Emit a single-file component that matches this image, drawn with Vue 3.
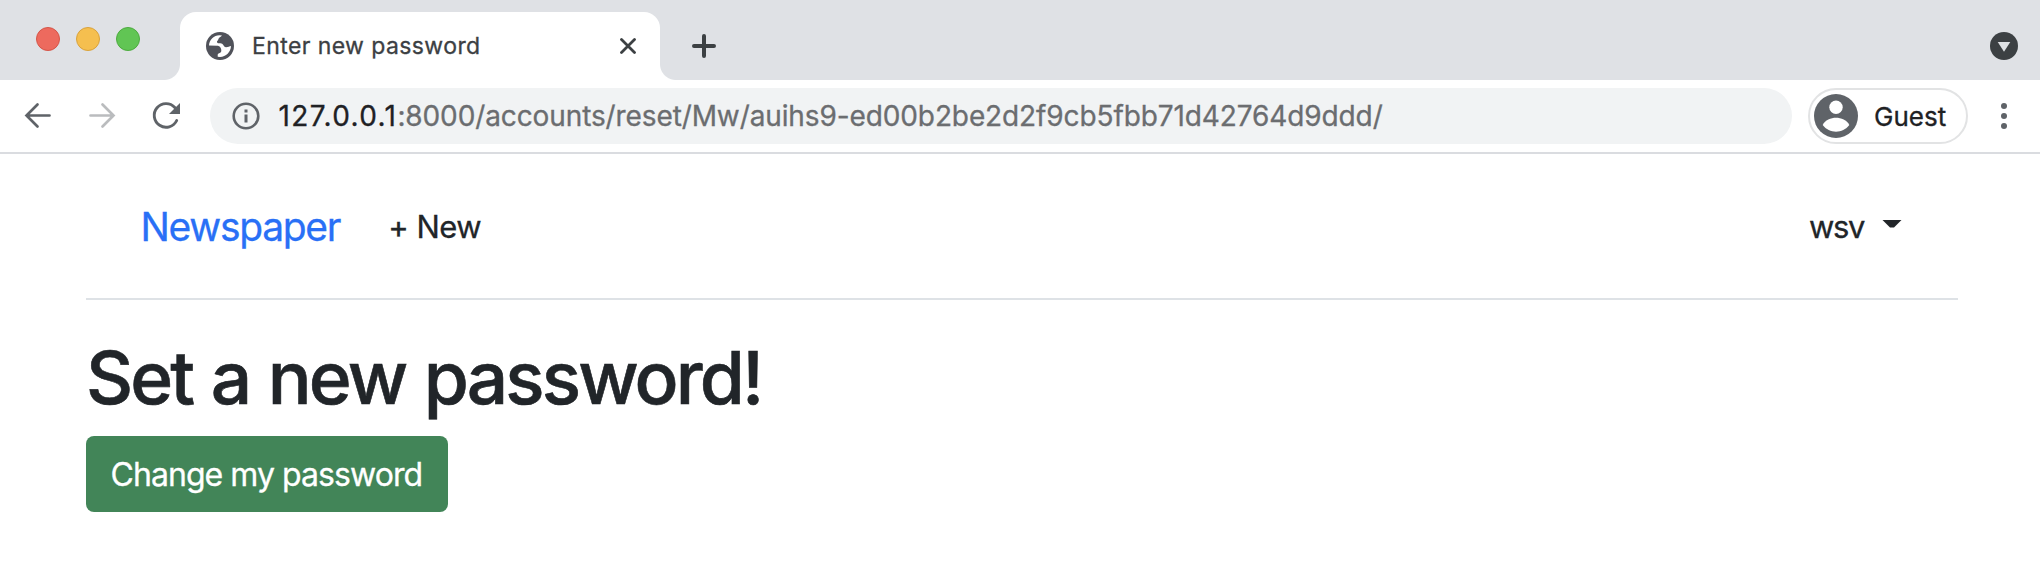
<script setup>
const dots = ['red', 'yellow', 'green']
</script>

<template>
  <div class="window">
    <header class="tabstrip">
      <div class="lights"><span v-for="d in dots" :key="d" class="light" :class="d"></span></div>
      <div class="tab">
        <svg class="globe" viewBox="0 0 28 28"><circle cx="14" cy="14" r="14" fill="#50525a" /><path d="M3 13.6C3.2 8 8 3.4 13.4 3.3L16 3.6C15 5 14.2 5 13.2 5.800C12 7 12.400 8.500 11 9.300C11 12 12.500 11 15.400 11.500C17.500 12 17.600 15 20 15.300C22 15.400 23.500 14 25 14C24.800 20 20 24.900 14 25L11.700 24.700V22.500C12.500 20.800 15 21.300 15.300 19C15.400 16.500 14.500 14.200 12 13.700Z" fill="#fff" /></svg>
        <span class="t title">Enter new password</span>
        <svg class="close" viewBox="0 0 16 16"><path d="M1.500 1.500 14.500 14.500M14.500 1.500 1.500 14.500" /></svg>
      </div>
      <svg class="plus" viewBox="0 0 24 24"><path d="M12 2V22M2 12H22" /></svg>
      <svg class="search" viewBox="0 0 28 28"><circle cx="14" cy="14" r="14" fill="#3c4043" /><path d="M7.700 10H20.300L14 19.700Z" fill="#dee0e4" /></svg>
    </header>
    <div class="toolbar">
      <svg class="arrow" viewBox="0 0 28 28"><path d="M25.500 13.500H2.500M13.500 2.500 2.500 13.500 13.500 24.500" /></svg>
      <svg class="arrow forward" viewBox="0 0 28 28"><path d="M2.500 13.500H25.500M14.500 2.500 25.500 13.500 14.500 24.500" /></svg>
      <svg class="reload" viewBox="0 0 28 28"><path d="M22.800 5.500A11.800 11.800 0 1 0 24.700 18.500" /><path d="M28 1V12H17Z" class="head" /></svg>
      <div class="omnibox">
        <svg class="info" viewBox="0 0 28 28"><circle cx="14" cy="14" r="12.300" /><path d="M12.500 7.500H15.500V10.500H12.500ZM12.500 12.500H15.500V20.500H12.500Z" /></svg>
        <span class="url"><span class="t host">127.0.0.1</span><span class="t path">:8000/accounts/reset/Mw/auihs9-ed00b2be2d2f9cb5fbb71d42764d9ddd/</span></span>
      </div>
      <div class="guest">
        <svg class="avatar" viewBox="0 0 44 44"><circle cx="22" cy="22" r="22" fill="#5f6368" /><circle cx="22" cy="13.300" r="6.700" fill="#fff" /><path d="M8.700 31C11 26 17 23.700 22 23.700S33 26 35.300 31C32 35.500 27 37.700 22 37.700S12 35.500 8.700 31Z" fill="#fff" /></svg>
        <span class="t name">Guest</span>
      </div>
      <svg class="menu" viewBox="0 0 6 26"><circle cx="3" cy="3" r="3" /><circle cx="3" cy="13" r="3" /><circle cx="3" cy="23" r="3" /></svg>
    </div>
    <main class="page">
      <nav class="nav">
        <a class="t brand">Newspaper</a>
        <a class="t new">+ New</a>
        <a class="user"><span class="t wsv">wsv</span><span class="caret"></span></a>
      </nav>
      <h1><span class="t">Set a new password!</span></h1>
      <button class="submit"><span class="t">Change my password</span></button>
    </main>
  </div>
</template>

<style>
body { background: #fff; }
</style>

<style scoped>
* { box-sizing: border-box; }
.window { height: 564px; overflow: hidden; font-family: Inter, "Liberation Sans", sans-serif; color: #212529; background: #fff; }
svg { display: block; flex: none; }
.t { white-space: nowrap; -webkit-text-stroke: .3px currentColor; }
.tabstrip { height: 80px; display: flex; background: #dfe1e5; }
.lights { width: 180px; padding: 27px 0 0 36px; display: flex; gap: 16px; }
.light { width: 24px; height: 24px; border-radius: 50%; border: 1px solid; }
.red { background: #ed6a5e; border-color: #d55548; }
.yellow { background: #f5bf4f; border-color: #d9a23c; }
.green { background: #61c554; border-color: #4dab3f; }
.tab { position: relative; width: 480px; height: 68px; margin-top: 12px; padding: 0 24px 0 26px; display: flex; align-items: center; background: #fff; border-radius: 16px 16px 0 0; }
.tab::before, .tab::after { content: ""; position: absolute; bottom: 0; width: 16px; height: 16px; }
.tab::before { left: -16px; background: radial-gradient(circle at 0 0, transparent 15.5px, #fff 16.500px); }
.tab::after { right: -16px; background: radial-gradient(circle at 100% 0, transparent 15.5px, #fff 16.500px); }
.globe { width: 28px; height: 28px; }
.title { margin-left: 18px; font-size: 23px; letter-spacing: .41px; color: #3c4043; }
.close { width: 16px; height: 16px; margin-left: auto; }
.close path { stroke: #3c4043; stroke-width: 2.800; stroke-linecap: round; }
.plus { width: 24px; height: 24px; margin: 34px 0 0 32px; }
.plus path { stroke: #3c4043; stroke-width: 4; stroke-linecap: round; }
.search { width: 28px; height: 28px; margin: 32px 22px 0 auto; }
.toolbar { height: 74px; padding: 8px 33px 0 24px; display: flex; align-items: flex-start; border-bottom: 2px solid #dadce0; }
.arrow { width: 28px; height: 28px; margin: 14px 36px 0 0; fill: none; stroke: #5f6368; stroke-width: 2.700; stroke-linecap: round; }
.forward { stroke: #babcbe; }
.reload { width: 28px; height: 28px; margin-top: 14px; fill: none; stroke: #5f6368; stroke-width: 2.900; stroke-linecap: round; }
.reload .head { fill: #5f6368; stroke: none; }
.omnibox { width: 1582px; height: 56px; margin-left: 30px; padding-left: 22px; display: flex; align-items: center; border-radius: 28px; background: #f1f3f4; }
.info { width: 28px; height: 28px; fill: none; stroke: #5f6368; stroke-width: 2.600; }
.info path { fill: #5f6368; stroke: none; }
.url { margin-left: 18.5px; font-size: 28px; color: #6b6d70; }
.host { letter-spacing: 1.380px; color: #202124; }
.path { letter-spacing: -.11px; }
.guest { width: 160px; height: 56px; margin-left: 16px; padding-left: 4px; display: flex; align-items: center; border: 2px solid #e2e3e4; border-radius: 28px; }
.avatar { width: 44px; height: 44px; }
.name { margin-left: 16px; font-size: 26px; color: #202124; }
.menu { width: 6px; height: 26px; margin: 15px 0 0 auto; fill: #5f6368; }
.page { width: 1872px; margin-left: 86px; }
.nav { height: 146px; padding: 0 56px 0 54.5px; display: flex; align-items: center; border-bottom: 2px solid #dee2e6; }
.brand { font-size: 39px; letter-spacing: -1.300px; color: #2970f6; }
.new { margin-left: 48px; font-size: 31px; letter-spacing: -.5px; }
.user { margin-left: auto; display: flex; align-items: center; font-size: 31px; }
.wsv { letter-spacing: -1.400px; }
.caret { width: 20px; height: 8px; margin: 0 0 5px 18px; background: #212529; clip-path: polygon(0 0, 100% 0, 60% 100%, 40% 100%); }
h1 { margin: 32px 0 0; font-size: 73px; line-height: 92px; font-weight: 500; letter-spacing: -2.900px; word-spacing: 2px; }
h1 .t { -webkit-text-stroke-width: .6px; }
.submit { height: 76px; width: 362px; margin-top: 12px; padding: 0 0 0 24.5px; display: flex; align-items: center; border: 0; border-radius: 8px; background: #428558; color: #fff; font: 400 32px Inter, sans-serif; letter-spacing: -.940px; }
</style>
